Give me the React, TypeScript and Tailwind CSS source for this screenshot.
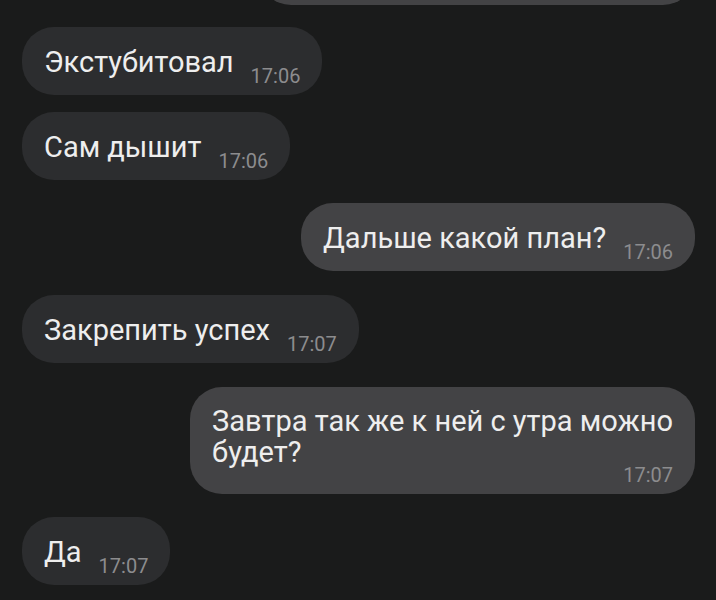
import React from "react";

const font = { fontFamily: "Roboto, 'Noto Sans', sans-serif" };

function Time({ t }: { t: string }) {
  return (
    <span className="shrink-0 text-[20px] leading-[19px] text-[#8c8c8e] ml-[17px]">{t}</span>
  );
}

function Bubble({ text, time, out }: { text: string; time: string; out?: boolean }) {
  return (
    <div className={out ? "flex justify-end" : "flex justify-start"}>
      <div
        className={
          "flex items-end h-[68px] rounded-[32px] pl-[22px] pr-[22px] pt-[20px] pb-[9px] " +
          (out ? "bg-[#434345]" : "bg-[#2c2d2f]")
        }
      >
        <span className="whitespace-nowrap text-[29px] leading-[30px] text-[#eeeeee] mb-[9px]">{text}</span>
        <Time t={time} />
      </div>
    </div>
  );
}

export default function App() {
  return (
    <div style={font} className="h-[600px] w-[716px] overflow-hidden bg-[#1a1b1b] pl-[22px] pr-[21px]">
      <div className="flex flex-col">
        <div className="flex justify-end mt-[-60px]">
          <div className="h-[65px] w-[436px] rounded-[32px] bg-[#434345]" />
        </div>
        <div className="mt-[22px]">
          <Bubble text="Экстубитовал" time="17:06" />
        </div>
        <div className="mt-[17px]">
          <Bubble text="Сам дышит" time="17:06" />
        </div>
        <div className="mt-[23px]">
          <Bubble out text="Дальше какой план?" time="17:06" />
        </div>
        <div className="mt-[24px]">
          <Bubble text="Закрепить успех" time="17:07" />
        </div>
        <div className="mt-[24px] flex justify-end">
          <div className="flex flex-col rounded-[32px] bg-[#434345] pl-[22px] pr-[22px] pt-[19px] pb-[9px]">
            <div className="text-[29px] leading-[31px] text-[#eeeeee]">
              <div className="whitespace-nowrap">Завтра так же к ней с утра можно</div>
              <div className="whitespace-nowrap">будет?</div>
            </div>
            <div className="flex justify-end mt-[-2px]">
              <span className="text-[20px] leading-[19px] text-[#8c8c8e]">17:07</span>
            </div>
          </div>
        </div>
        <div className="mt-[23px]">
          <Bubble text="Да" time="17:07" />
        </div>
      </div>
    </div>
  );
}
